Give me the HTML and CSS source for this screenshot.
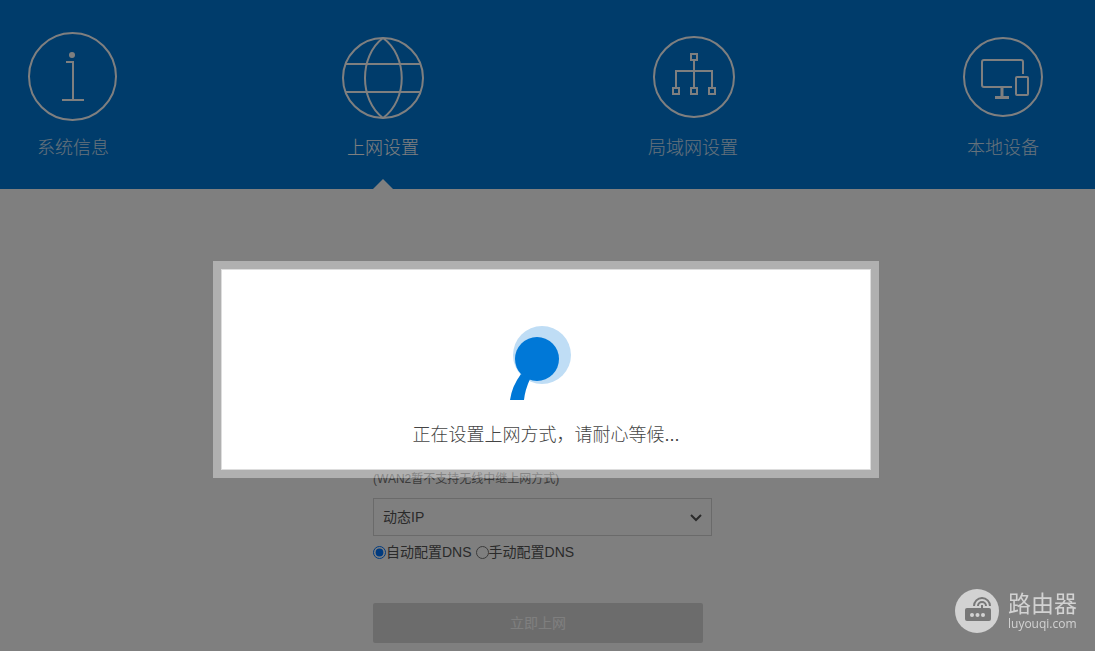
FILE: index.html
```
<!DOCTYPE html>
<html lang="zh-CN">
<head>
<meta charset="utf-8">
<meta name="viewport" content="width=device-width, initial-scale=1">
<title>上网设置</title>
<link rel="stylesheet" href="styles.css">
</head>
<body>
<div class="header">
	<ul class="nav">
		<li><a href="#">
			<svg width="90" height="90" viewBox="0 0 90 90">
				<circle cx="44.5" cy="44.5" r="43.5"/>
				<circle class="fill" cx="44" cy="23" r="3"/>
				<path d="M38 30h7v38M34 68h22"/>
			</svg>
			<span>系统信息</span>
		</a></li>
		<li class="current"><a href="#">
			<svg width="90" height="90" viewBox="0 0 90 90">
				<circle cx="45" cy="46" r="40"/>
				<path d="M45 6C21 24 21 68 45 86M45 6C70 24 70 68 45 86M8 32h74M8 60h74"/>
			</svg>
			<span>上网设置</span>
		</a></li>
		<li><a href="#">
			<svg width="90" height="90" viewBox="0 0 90 90">
				<circle cx="46" cy="45" r="40"/>
				<path d="M43 22h6v6h-6zM25 56h6v6h-6zM43 56h6v6h-6zM61 56h6v6h-6zM46 28v28M28 56V39h36v17"/>
			</svg>
			<span>局域网设置</span>
		</a></li>
		<li><a href="#">
			<svg width="90" height="90" viewBox="0 0 90 90">
				<circle cx="45" cy="45" r="39"/>
				<path d="M54 55H26q-2 0-2-2V30q0-2 2-2h37q2 0 2 2v12"/>
				<rect x="58" y="45" width="12" height="18" rx="1"/>
				<path class="stand" d="M44 55v10M37 65.500h14"/>
			</svg>
			<span>本地设备</span>
		</a></li>
	</ul>
</div>

<form class="wan" action="#">
	<p class="tip">(WAN2暂不支持无线中继上网方式)</p>
	<div class="select">
		<select aria-label="上网方式">
			<option>动态IP</option>
		</select>
		<svg width="12" height="8" viewBox="0 0 12 8"><path d="M1 1l5 5 5-5"/></svg>
	</div>
	<div class="dns">
		<input type="radio" name="dns" id="dnsAuto" checked><label for="dnsAuto">自动配置DNS</label>
		<input type="radio" name="dns" id="dnsManual"><label for="dnsManual">手动配置DNS</label>
	</div>
	<button type="submit" class="btn">立即上网</button>
</form>

<div class="mask">
	<div class="dialog">
		<div class="dialog-con">
			<svg class="loading" width="72" height="74" viewBox="0 0 72 74">
				<circle class="light" cx="32" cy="29" r="29"/>
				<circle cx="27" cy="33" r="22"/>
				<path d="M11 48Q2 60 0 74H14Q15 64 20 53z"/>
			</svg>
			<p>正在设置上网方式，请耐心等候...</p>
		</div>
	</div>
</div>

<div class="brand">
	<svg width="44" height="44" viewBox="0 0 44 44">
		<circle class="bg" cx="22" cy="22" r="22"/>
		<rect class="box" x="10" y="19" width="26" height="13" rx="2"/>
		<path class="wave" d="M19 17a8 8 0 0 1 16 0M23 17a4 4 0 0 1 8 0M27 16v4"/>
		<g class="bg"><circle cx="17" cy="26" r="2"/><circle cx="22.500" cy="26" r="2"/><circle cx="28" cy="26" r="2"/></g>
	</svg>
	<div class="brand-text">
		<strong>路由器</strong>
		<span>luyouqi.com</span>
	</div>
</div>
</body>
</html>
```
FILE: styles.css
```
body,ul,li,p{margin:0;padding:0;}
ul{list-style-type:none;}
*{box-sizing:border-box;}
body{background:#fff;color:#555;font:14px/20px "Liberation Sans","Noto Sans CJK SC",sans-serif;}
svg{display:block;fill:none;}

/* 顶部导航 */
.header{background:#0078d7;}
.nav{display:flex;justify-content:space-between;padding:32px 47px 0 28px;}
.nav li{position:relative;width:90px;height:157px;}
.nav a{display:block;text-align:center;color:#fff;text-decoration:none;}
.nav svg{stroke:#fff;stroke-width:2;}
.nav svg .fill{fill:#fff;stroke:none;}
.nav svg .stand{stroke-width:3;}
.nav span{display:block;margin-top:12px;font-size:18px;line-height:28px;font-weight:300;white-space:nowrap;opacity:.8;}
.nav .current span{opacity:1;}
.nav .current:after{content:"";position:absolute;left:50%;bottom:0;margin-left:-10px;border:10px solid transparent;border-top:0;border-bottom-color:#fff;}

/* 上网方式 */
.wan{width:349px;margin:0 auto;padding-top:280px;}
.tip{font-size:12px;color:#777;}
.select{position:relative;width:339px;margin-top:9px;}
.select select{display:block;width:100%;height:38px;padding:0 9px;border:1px solid #d5d5d5;background:#fff;color:#555;font:inherit;-webkit-appearance:none;appearance:none;}
.select svg{position:absolute;right:10px;top:16px;stroke:#555;stroke-width:2;pointer-events:none;}
.dns{display:flex;align-items:center;margin-top:6px;}
.dns input{width:13px;height:13px;margin:0;}
.dns label{margin-right:4px;}
.btn{display:block;width:330px;height:40px;margin-top:41px;border:0;border-radius:2px;background:#d9d9d9;color:#fff;font:inherit;}

/* 遮罩和弹框 */
.mask{position:fixed;top:0;right:0;bottom:0;left:0;display:flex;justify-content:center;align-items:flex-start;padding:261px 3px 0 0;background:rgba(0,0,0,.5);}
.dialog{width:666px;border:8px solid rgba(255,255,255,.38);}
.dialog-con{padding:56px 0 19px;border:1px solid #ddd;background:#fff;text-align:center;}
.dialog p{margin-top:20px;font-size:18px;line-height:30px;font-weight:300;color:#444;}
.loading{margin:0 auto;fill:#0078d7;}
.loading .light{fill:#bfddf5;}

.brand{position:fixed;right:18px;bottom:18px;display:flex;align-items:center;color:#d2d2d2;}
.brand .bg{fill:#d2d2d2;}
.brand .box{fill:#777;}
.brand .wave{stroke:#777;stroke-width:2;}
.brand-text{margin-left:9px;}
.brand-text strong{display:block;font-size:23px;line-height:26px;font-weight:400;}
.brand-text span{display:block;font:12px/14px "Open Sans",sans-serif;}
```
